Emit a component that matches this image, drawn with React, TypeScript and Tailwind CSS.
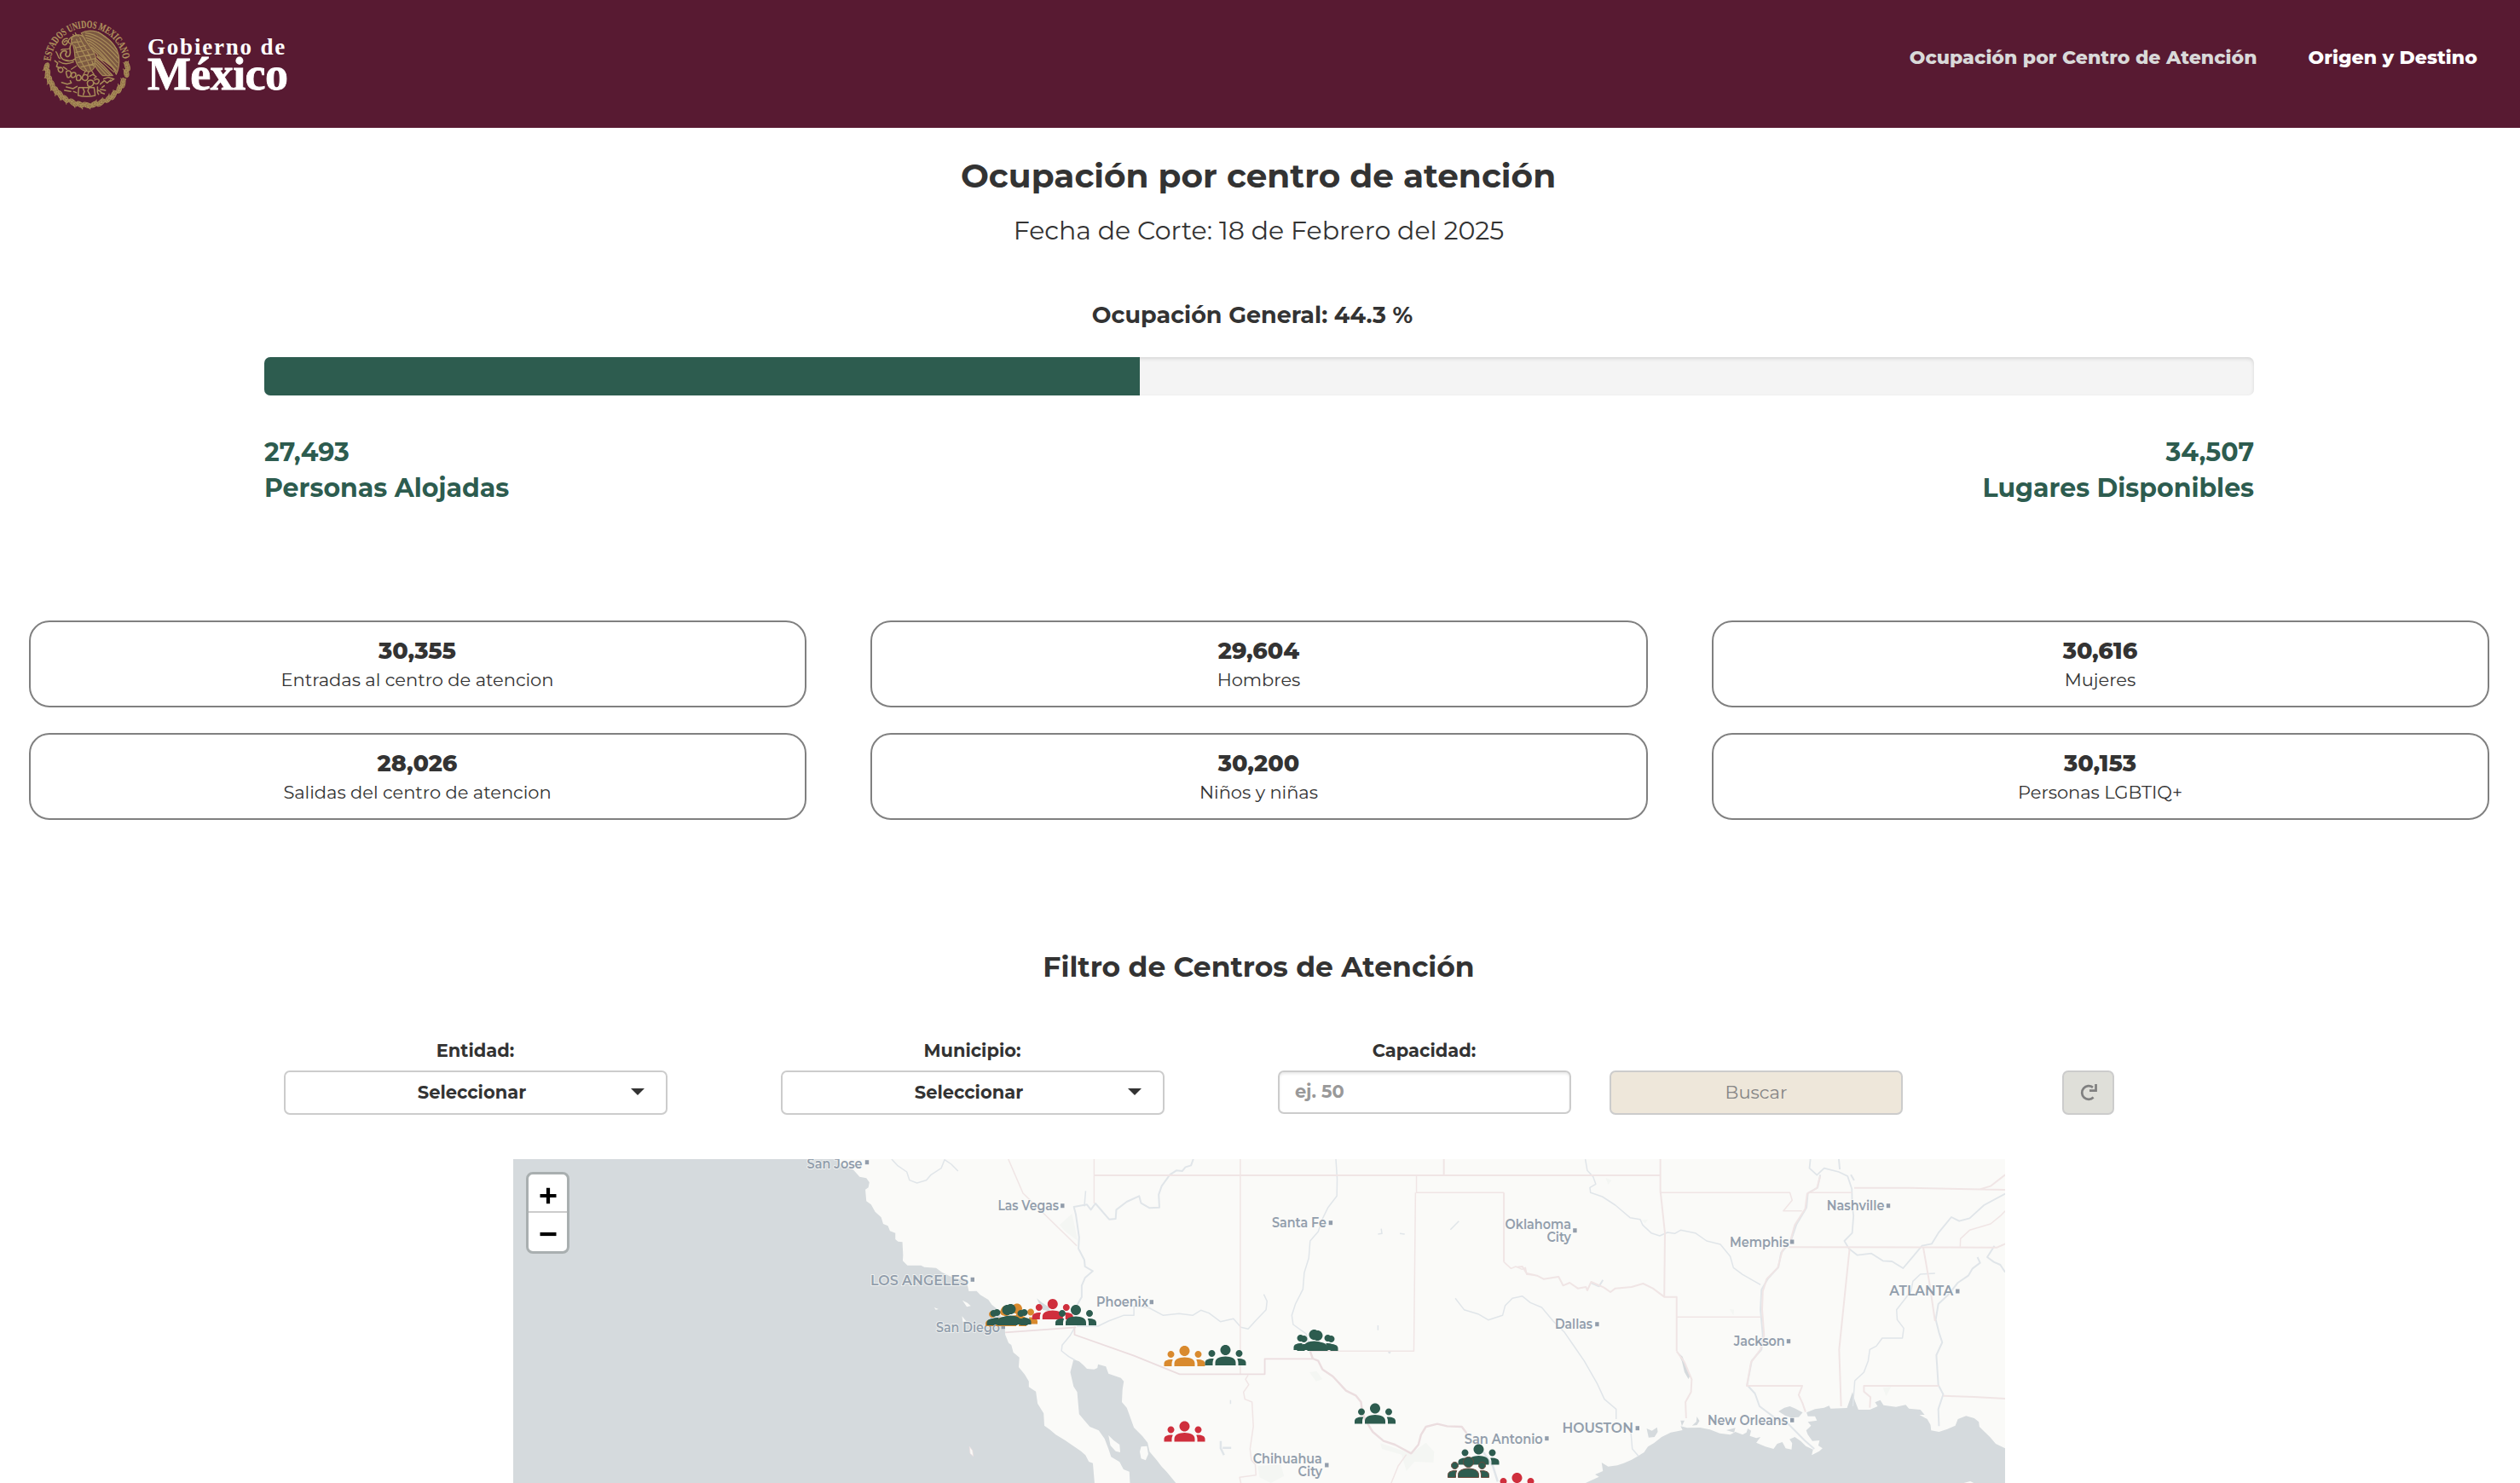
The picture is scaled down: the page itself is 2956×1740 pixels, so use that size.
import React from "react";

const stats = [
  { value: "30,355", label: "Entradas al centro de atencion" },
  { value: "29,604", label: "Hombres" },
  { value: "30,616", label: "Mujeres" },
  { value: "28,026", label: "Salidas del centro de atencion" },
  { value: "30,200", label: "Niños y niñas" },
  { value: "30,153", label: "Personas LGBTIQ+" },
];

// Wreath leaves: angle (degrees, clockwise from the right) around the seal.
const wreath = [2, 12, 27, 37, 49, 58, 70, 80, 90, 100, 110, 122, 131, 140, 149, 158, 167, 177];

function Seal() {
  return (
    <svg viewBox="140 60 330 330" className="h-[110px] w-[110px]" fill="none" stroke="#a88c58" strokeLinecap="round" strokeLinejoin="round">
      <defs>
        <path id="seal-arc" d="M177 215 A128.500 128.500 0 0 1 433 215" />
      </defs>
      <text fill="#b0935d" stroke="#b0935d" strokeWidth="0.6" className="font-['Liberation_Serif'] text-[37px] font-bold">
        <textPath href="#seal-arc" textLength="388" lengthAdjust="spacingAndGlyphs">
          ESTADOS UNIDOS MEXICANOS
        </textPath>
      </text>
      {/* Wreath */}
      {wreath.map((a, i) => (
        <g key={a} transform={`rotate(${a} 305 228) translate(447 228) rotate(${a < 90 ? 70 : 110})`} strokeWidth="3">
          <ellipse rx={i % 2 ? 14 : 17} ry="8" fill="#8a6a44" />
          <path d="M-14 0 H15 M-8 -6 L0 0 L-8 6 M2 -6 L9 0 L2 6 M-16 -9 l8 4 M-16 9 l8 -4" />
        </g>
      ))}
      {/* Wing */}
      <g strokeWidth="3.6">
        <path fill="#7d5a42" d="M285 116 C310 102 345 108 365 128 C392 142 412 170 417 196 C420 222 416 246 408 262 C400 240 385 220 366 214 C350 212 342 200 340 190 C326 176 300 160 296 136 Z" />
        <path d="M300 116 C340 120 380 150 414 190" />
        <path d="M300 124 C338 130 376 160 414 204" />
        <path d="M302 133 C334 140 372 172 413 220" />
        <path d="M306 142 C334 150 366 184 411 236" />
        <path d="M312 152 C336 164 362 194 408 250" />
        <path d="M320 166 C338 176 358 200 400 240" />
        <path d="M345 113 C372 128 398 152 410 174" />
      </g>
      {/* Body and tail feathers */}
      <g strokeWidth="3.6">
        <path fill="#7d5a42" d="M250 134 C262 120 284 118 294 132 C302 150 322 168 332 190 C342 216 336 244 314 252 C290 254 268 234 264 206 C260 186 262 160 250 148 Z" />
        <path d="M268 138 C280 170 300 190 318 244 M280 132 C290 160 316 184 328 232 M262 160 C272 190 282 220 304 248 M262 150 L284 146 M266 168 L300 160 M266 184 L316 174 M268 202 L328 190 M274 220 L334 206 M284 236 L334 224" />
        <path fill="#7d5a42" d="M334 204 C352 220 378 246 396 266 L360 266 C348 254 338 242 332 228 Z" />
        <path d="M336 214 L386 264 M336 224 L374 265 M340 200 L400 254 M348 200 L404 244" />
        <path d="M300 250 L292 264 M312 252 L306 266 M322 250 L330 262 M268 232 L250 244" />
      </g>
      {/* Head, beak and snake */}
      <g strokeWidth="5">
        <path strokeWidth="4" d="M276 126 C262 122 246 130 240 142 C238 150 244 156 252 152 C258 148 262 146 266 148 M250 138 L254 138 M240 146 L234 152 M268 124 l-4 -8 M260 128 l-4 -7" />
        <path d="M236 136 C224 134 216 144 220 154 C224 160 232 160 234 152 M226 148 C228 142 234 142 238 146" />
        <path d="M250 156 C238 168 252 182 244 194 C236 206 226 196 232 186 C238 178 222 176 216 184 C206 194 214 208 228 212 C242 216 256 214 262 208" />
        <path strokeWidth="4" d="M196 182 C204 190 200 200 210 206 M206 216 C220 226 240 226 258 218 M214 176 C220 170 236 176 244 170" />
      </g>
      {/* Cactus and rock */}
      <g strokeWidth="4.500">
        <path d="M192 214 L202 222 L198 234 L210 240 M204 246 C200 238 212 234 218 240 C224 248 218 256 210 254 C206 252 204 250 204 246 Z M222 236 L234 244" />
        <path d="M232 258 C230 248 244 246 248 254 C252 264 244 276 236 272 Z M250 262 C252 252 266 254 266 262 C266 272 254 276 250 270 Z" />
        <path d="M268 270 C272 260 286 264 284 276 C282 286 268 286 268 278 Z M290 268 C298 258 312 264 308 276 C304 288 290 284 288 276 Z" />
        <path d="M306 292 C308 280 326 278 328 290 C330 302 316 308 308 302 Z M314 268 L326 262 L338 270 L330 276 M332 282 C340 274 352 280 346 290 C342 298 332 296 330 290" />
        <path d="M216 290 L236 296 L250 292 L246 284 M232 306 L256 312 L270 304 M352 296 L366 284 L376 292 L388 282 M364 278 L380 272 L400 278 L388 286 M226 318 L248 322 M258 322 L268 326" />
        <path d="M276 308 H330 L334 336 C312 342 296 342 274 336 Z M290 308 L296 322 L292 334 M312 308 L308 320 L316 334" />
        <path d="M342 306 C344 316 338 326 346 332 M352 314 L370 318 M354 326 L366 330 M358 308 L366 302 M344 318 L354 322" />
      </g>
    </svg>
  );
}

const people =
  "M12 12.75c1.63 0 3.07.39 4.24.9 1.08.48 1.76 1.56 1.76 2.73V18H6v-1.61c0-1.18.68-2.26 1.76-2.73 1.17-.52 2.61-.91 4.24-.91zM4 13c1.1 0 2-.9 2-2s-.9-2-2-2-2 .9-2 2 .9 2 2 2zm1.13 1.1c-.37-.06-.74-.1-1.13-.1-.99 0-1.93.21-2.78.58C.48 14.9 0 15.62 0 16.43V18h4.5v-1.61c0-.83.23-1.61.63-2.29zM20 13c1.1 0 2-.9 2-2s-.9-2-2-2-2 .9-2 2 .9 2 2 2zm4 3.43c0-.81-.48-1.53-1.22-1.85-.85-.37-1.79-.58-2.78-.58-.39 0-.76.04-1.13.1.4.68.63 1.46.63 2.29V18H24v-1.57zM12 6c1.66 0 3 1.34 3 3s-1.34 3-3 3-3-1.34-3-3 1.34-3 3-3z";

const GREEN = "#2d5c4f";
const ORANGE = "#d98a2e";
const RED = "#cf2f3d";

// Centre x, bottom y, colour, optional outline
const markers: [number, number, string, string?][] = [
  [1180, 1556, ORANGE],
  [1193, 1553.5, ORANGE],
  [1185.5, 1554, GREEN],
  [1181.5, 1555, GREEN],
  [1234.800, 1548, RED],
  [1262, 1555, GREEN],
  [1389.500, 1603, ORANGE],
  [1437.500, 1602, GREEN],
  [1541.500, 1584, GREEN],
  [1545.500, 1585, GREEN],
  [1389.500, 1691.500, RED],
  [1613, 1670.500, GREEN],
  [1734.500, 1718.500, GREEN],
  [1722.500, 1733.500, GREEN, "#6b4a3c"],
  [1779.500, 1752, RED],
];

// Text, left x, width, baseline y, large
const places: [string, number, number, number, boolean?][] = [
  ["San Jose", 946.600, 65, 1370.700],
  ["Las Vegas", 1170.400, 71.500, 1419.700],
  ["LOS ANGELES", 1021, 115, 1508.300, true],
  ["San Diego", 1098, 75, 1562.700],
  ["Phoenix", 1286, 61, 1533],
  ["Santa Fe", 1492, 64, 1440.300],
  ["Chihuahua", 1469.800, 81, 1717],
  ["City", 1522.600, 28.500, 1731.700],
  ["Oklahoma", 1765.600, 77.500, 1442],
  ["City", 1814.400, 28.500, 1456.700],
  ["Nashville", 2142.800, 67.700, 1419.700],
  ["Memphis", 2029, 69.400, 1462.700],
  ["ATLANTA", 2216.300, 75, 1519.700, true],
  ["Dallas", 1824, 44, 1559.300],
  ["Jackson", 2033.700, 60, 1578.700],
  ["New Orleans", 2003, 94, 1671.700],
  ["HOUSTON", 1832.400, 83.500, 1680.700, true],
  ["San Antonio", 1717.800, 92, 1693.700],
];

const dots: [number, number][] = [
  [1017, 1363.700], [1246.300, 1414.700], [1140.800, 1501.300], [1176.800, 1556.700], [1350.800, 1527.700],
  [1560.900, 1434.700], [1556.300, 1719], [1847.400, 1443.700], [2215, 1414.700], [2102.200, 1457],
  [2296.300, 1515], [1873.400, 1553.700], [2098, 1573.700], [2102.200, 1666.300], [1920.800, 1675.700], [1814.400, 1687.700],
];

const WEST = "translate(590 1350) scale(0.3954 0.33333)";
const CENTRAL = "translate(1200 1350) scale(0.3827 0.33333)";
const EAST = "translate(1780 1350) scale(0.3827 0.33333)";

function Line({ d, w = 1.5 }: { d: string; w?: number }) {
  return <path d={d} strokeWidth={w} vectorEffect="non-scaling-stroke" />;
}

function MapCanvas() {
  return (
    <svg viewBox="602 1360 1750 380" className="block h-[380px] w-[1750px] bg-[#fafaf8]">
      {/* Water */}
      <g fill="#d5dadd">
        <path transform={WEST} d="M0 0 H975 L1000 45 L1040 68 L1058 92 L1078 97 L1087 112 L1084 130 L1075 137 L1078 178 L1092 190 L1104 215 L1122 235 L1128 258 L1142 265 L1148 283 L1164 290 L1164 312 L1172 320 L1185 322 L1187 368 L1186 388 L1200 404 L1240 404 L1250 410 L1285 413 L1302 428 L1325 442 L1350 450 L1376 462 L1382 495 L1405 494 L1416 508 L1440 525 L1450 542 L1464 556 L1478 585 L1488 610 L1490 648 L1500 677 L1508 684 L1514 710 L1532 728 L1530 762 L1548 788 L1560 812 L1560 832 L1581 848 L1586 890 L1604 925 L1606 968 L1622 982 L1640 1000 L1668 1020 L1690 1038 L1715 1058 L1728 1072 L1738 1095 L1750 1100 L1755 1170 L1755 1200 H0 Z" />
        <g transform={CENTRAL}>
          <path d="M155 735 L172 742 L186 756 L196 768 L218 770 L228 765 L230 752 L254 760 L262 785 L300 800 L309 812 L305 840 L303 885 L318 905 L326 930 L340 975 L366 1005 L382 1028 L388 1060 L410 1090 L425 1112 L440 1130 L470 1172 H328 L326 1130 L308 1122 L296 1096 L270 1078 L262 1050 L250 1014 L232 985 L205 972 L172 928 L166 850 L155 830 L145 780 Z" />
          <path d="M42 520 L58 535 L78 550 L84 566 L60 560 Z M112 1138 L122 1172 H104 Z" />
        </g>
        <g transform={EAST}>
          <path d="M205 1172 L250 1148 L238 1140 L262 1128 L258 1098 L278 1112 L306 1108 L326 1100 L350 1088 L370 1075 L388 1062 L400 1042 L418 1030 L442 1008 L470 992 L506 984 L500 970 L520 976 L560 975 L590 982 L620 995 L652 1000 L668 990 L690 1000 L702 992 L706 978 L716 986 L712 1004 L732 1012 L745 1008 L732 1028 L760 1042 L785 1050 L796 1032 L812 1026 L822 1048 L840 1052 L842 1030 L834 1016 L850 1008 L868 1022 L884 1040 L906 1052 L902 1072 L925 1058 L935 1048 L922 1038 L926 1020 L904 1022 L890 1000 L885 985 L900 968 L890 955 L918 950 L912 935 L890 935 L886 922 L912 910 L940 905 L955 898 L960 908 L1010 906 L1018 880 L1027 850 L1034 880 L1045 912 L1080 912 L1104 900 L1096 886 L1112 878 L1122 896 L1160 902 L1190 895 L1200 908 L1235 912 L1248 930 L1232 930 L1256 945 L1266 965 L1268 985 L1292 990 L1318 980 L1342 968 L1350 945 L1375 934 L1400 942 L1414 955 L1416 972 L1432 990 L1450 1010 L1466 1032 L1495 1048 V1172 Z" />
          <path d="M800 918 L818 905 L835 900 L852 908 L874 922 L862 938 L838 940 L820 932 Z" />
          <path d="M396 978 L412 986 L428 974 L430 990 L420 1008 L402 1010 Z" />
          <path d="M492 710 L506 725 L516 760 L530 790 L524 804 L512 780 L504 742 Z" />
          <path d="M550 936 L558 952 L550 966 L535 968 L548 955 Z M500 950 L512 950 L504 970 Z M640 984 L668 976 L664 992 Z" />
        </g>
      </g>
      {/* Islands */}
      <g fill="#fafaf8">
        <path transform={WEST} d="M1363 527 L1378 536 L1388 547 L1376 550 Z M1279 552 L1292 558 L1284 560 Z M1362 583 L1374 600 L1364 602 Z" />
        <path transform={WEST} d="M1384 1042 L1393 1056 L1395 1076 L1386 1066 Z" stroke="#eedfe0" strokeWidth="2" />
        <path transform={CENTRAL} d="M262 1002 L278 1020 L296 1035 L298 1062 L284 1058 L268 1038 Z M362 1042 L380 1040 L384 1068 L376 1090 L362 1084 L358 1060 Z" />
        <path transform={EAST} d="M1368 1170 l20 -6 l14 8 Z" />
      </g>
      {/* Parks */}
      <g fill="#f4f6f3">
        <path transform={CENTRAL} d="M150 222 L158 262 L168 318 L130 285 L112 262 Z M878 780 L900 776 L918 805 L898 812 Z M1095 1030 L1190 1066 L1235 1028 L1260 1060 L1258 1098 L1200 1095 L1175 1128 L1160 1070 L1100 1050 Z M720 1110 L790 1105 L800 1145 L760 1170 L725 1150 Z" />
        <path transform={EAST} d="M270 95 L288 105 L278 120 Z M1120 835 L1145 832 L1130 865 Z M650 558 L664 560 L662 580 Z M380 245 L400 242 L392 256 Z" />
      </g>
      {/* Rivers */}
      <g fill="none" stroke="#e0e5e9" strokeLinejoin="round">
        <g transform={WEST}>
          <Line d="M1153 30 L1170 52 L1198 75 L1206 104 L1228 114 L1256 104 L1270 85 L1300 62 L1310 32 L1330 48 L1350 72" />
        </g>
        <g transform={CENTRAL}>
          <Line w={2} d="M522 30 L515 52 L498 58 L488 72 L470 70 L450 85 L425 125 L416 155 L418 200 L388 202 L362 185 L356 160 L318 180 L286 208 L284 240 L264 242 L240 210 L222 186 L208 208 L196 190 L156 198 L162 225 L172 305 L170 345 L188 385 L190 408 L214 424 L190 448 L180 475 L180 515 L165 545" />
          <Line d="M192 142 L188 196" />
          <Line d="M165 618 L230 618 L262 600 L308 580 L340 580 L340 548 L384 552 L430 580 L478 574 L520 580 L545 562 L570 572 L605 602 L645 592 L668 622 L690 628 L712 600 L745 560 L748 530 L738 506" />
          <Line d="M959 30 L963 100 L962 160 L935 200 L918 240 L905 285 L880 318 L876 378 L862 430 L858 488 L835 540 L824 580 L828 612 L868 645 L880 700" />
          <Line d="M160 620 L145 650 L120 685 L118 705 L140 725 L160 738" />
          <Line d="M1325 520 L1352 560 L1395 575 L1426 596 L1470 580 L1478 545 L1500 520 L1530 512 L1555 535 L1590 552 L1625 600 L1660 640 L1690 690 L1720 740 L1760 820 L1782 875 L1818 910 L1818 945" />
          <Line d="M1310 278 L1336 248 M1098 275 L1100 292 L1088 294 M1155 292 L1170 294 M1088 615 V632 M636 878 V892" />
          <Line w={2.500} d="M606 1022 L606 1048 L616 1072 M612 1046 L638 1046" />
          <Line w={2.500} d="M1120 708 L1126 712 M1410 1060 L1440 1110 L1455 1165" />
        </g>
        <g transform={EAST}>
          <Line d="M208 30 L214 70 L232 92 L240 118 L222 130 L224 148 L260 162 L300 192 L345 236 L376 242 L384 262 L410 290 L436 300 L460 288 L482 292 L500 280 L545 290 L580 318 L622 330 L652 372 L662 412 L690 436 L745 472" />
          <Line d="M348 995 L352 1050 L370 1074" />
          <Line w={1.800} d="M898 30 L895 62 L918 86 L940 62 L985 75 L1012 90 L1025 135 L1026 190 L1030 230 L1026 290 L1002 318 L1016 345 L1042 368 L1085 362 L1120 388 L1148 390 L1182 414 L1210 376 L1240 335 L1270 328 L1290 290 L1330 234 L1354 248 L1386 238 L1430 192 L1495 152" />
          <Line w={2} d="M985 30 L988 66 M1022 85 L1032 105" />
          <Line w={2} d="M928 85 L920 130 L890 150 L886 200 L855 260 L838 318 L808 360 L800 410 L768 450 L748 490 L745 560 L752 650 L748 700 L718 740 L704 825 L728 855 L742 900 L800 950 L830 962 L880 1020 L910 1050" />
          <Line d="M1280 432 L1235 435 L1212 460 L1206 495 L1186 525 L1162 560 L1164 595 L1184 625 L1180 660 L1118 660 L1100 688 L1080 700 L1075 740 L1062 780 L1034 810 L1028 900" />
          <Line w={2} d="M1410 375 L1418 395 L1395 415 L1382 440 L1350 465 L1320 508 L1290 540 L1282 595 L1292 640 L1302 675 L1284 720 L1290 825 L1305 858 L1290 910 L1292 970" />
          <Line w={2} d="M1462 335 L1440 375 L1460 392 L1480 402 L1495 428 M226 466 L250 478 L262 455" />
        </g>
      </g>
      {/* State and country borders */}
      <g fill="none" stroke="#f0e5e5" strokeLinejoin="round">
        <g transform={CENTRAL}>
          <Line d="M-45 30 L0 150 L165 335" />
          <Line d="M218 30 V186" />
          <Line w={2} d="M218 87 H1517" />
          <Line d="M666 30 V787" />
          <Line w={2} d="M1290 30 V87" />
          <Line d="M1206 87 V148 H1474" />
          <Line w={2} d="M1474 148 V392" />
          <Line d="M1203 148 L1198 706 H880" />
          <Line d="M1474 392 L1496 415 L1510 408 L1530 418 L1540 412 L1544 436 L1568 438" />
          <Line d="M690 790 L682 805 L692 824 L676 850 L680 875 L702 885 L706 970 L696 1050 L700 1090 L712 1105 L714 1142 L664 1150 L668 1172" />
          <Line d="M1175 1070 L1150 1110 L1128 1172" />
        </g>
        <g transform={EAST}>
          <Line w={2} d="M0 87 H436 M438 30 V140 L452 290 L450 515" />
          <Line d="M436 148 H835 L842 175 L815 212 H872" />
          <Line d="M890 148 H1025" />
          <Line w={2} d="M1032 131 H1200 L1495 138 M1415 137 L1450 125 L1495 85" />
          <Line w={2} d="M832 340 L1470 341 L1495 328" />
          <Line d="M1357 338 L1358 310 L1386 280 L1450 258 L1480 230 L1495 212" />
          <Line w={2} d="M1018 345 L1004 500 L986 700 L992 900" />
          <Line w={2} d="M1244 342 L1262 460 L1280 600" />
          <Line w={2} d="M0 410 L15 408 L28 432 L60 440 L80 452 L126 444 L140 475 L160 465 L185 485 L210 480 L214 492 L226 462 L265 482 L285 498 L300 485 L350 480 L385 468 L415 485 L450 515 H488 V706" />
          <Line d="M488 586 H746" />
          <Line w={2} d="M928 90 L918 132 L888 152 L882 205 L850 262 L836 320 L812 352 L798 412 L764 452 L752 495 L750 560 L756 650 L745 700 L716 745 L703 828 H873 L862 860 L874 890 L883 920" />
          <Line w={2} d="M488 706 L512 745 L534 805 L532 850 L515 885 L517 942" />
          <Line w={2} d="M1080 905 L1082 868 L1062 848 V828 H1292" />
          <Line w={2} d="M1305 863 L1400 867 L1495 873" />
        </g>
        <g stroke="#ebdddf">
          <g transform={WEST}>
            <Line w={1.800} d="M1490 640 L1700 622" />
          </g>
          <g transform={CENTRAL}>
            <Line w={1.800} d="M158 620 V648 L340 722 L480 787 H741 V733 H888" />
            <Line w={2.400} d="M880 706 L888 732 L905 740 L918 770 L950 795 L990 845 L1020 862 L1036 885 L1040 920 L1050 950 L1072 990 L1105 1022 L1140 1035 L1190 1066 L1212 1035 L1220 1000 L1235 972 L1270 962 L1300 970 L1345 972 L1360 995" />
          </g>
        </g>
      </g>
      {/* Place names */}
      <g fill="#929eac" stroke="#fafaf8" strokeOpacity="0.7" strokeWidth="2" paintOrder="stroke" strokeLinejoin="round">
        {places.map(([name, x, width, y, large]) => (
          <text
            key={`${name}-${x}`}
            x={x}
            y={y}
            textLength={width}
            lengthAdjust="spacingAndGlyphs"
            className={large ? "font-['Montserrat','Inter',sans-serif] text-[16.5px] font-semibold" : "font-['Montserrat','Inter',sans-serif] text-[15.5px] font-semibold"}
          >
            {name}
          </text>
        ))}
      </g>
      {dots.map(([x, y]) => (
        <rect key={`${x}-${y}`} x={x - 2.200} y={y - 2.500} width="4.400" height="5" fill="#929dab" />
      ))}
      {/* Centres */}
      {markers.map(([x, y, color, outline], i) => (
        <path key={i} d={people} transform={`translate(${x - 24} ${y - 36}) scale(2)`} fill={color} stroke={outline ?? "none"} strokeWidth="0.5" />
      ))}
    </svg>
  );
}

function SelectBox() {
  return (
    <div className="flex h-[52px] w-[450px] items-center rounded-[7px] border-2 border-[#ccc] bg-white pr-[25px] pl-[32px]">
      <span className="flex-1 text-center text-[21px] leading-[48px] font-bold">Seleccionar</span>
      <svg viewBox="0 0 16 8" className="-mt-[3px] h-[8px] w-[16px]" fill="#333">
        <path d="M0 0 H16 L8 8 Z" />
      </svg>
    </div>
  );
}

function Field({ label, children }: { label: string; children: React.ReactNode }) {
  return (
    <div className="flex flex-col">
      <div className="mb-[7px] pr-px text-center text-[21px] leading-[32px] font-bold">{label}</div>
      {children}
    </div>
  );
}

export default function App() {
  return (
    <div className="h-[1740px] w-[2956px] overflow-hidden bg-white font-['Montserrat','Inter',sans-serif] text-[#333]">
      <header className="flex h-[150px] justify-between bg-[#581a32] pr-[50px] pl-[47px] text-white">
        <div className="flex pt-[20px]">
          <Seal />
          <div className="ml-[16px] flex flex-col pt-[21px] font-['Liberation_Serif',serif] font-bold whitespace-nowrap">
            <span className="text-[27px] leading-[28px] tracking-[1.8px]">Gobierno de</span>
            <span className="-mt-[2px] text-[54px] leading-[40px] tracking-[-0.6px] [-webkit-text-stroke:0.8px_white]">México</span>
          </div>
        </div>
        <nav className="flex gap-[60px] pt-[52px] text-[22px] leading-[31px] font-extrabold tracking-[0.04px]">
          <a className="text-[#d9d9d9]">Ocupación por Centro de Atención</a>
          <a>Origen y Destino</a>
        </nav>
      </header>

      <main>
        <section className="pt-[28px] text-center">
          <h1 className="pr-[4px] text-[39px] leading-[56px] font-bold">Ocupación por centro de atención</h1>
          <p className="mt-[17px] pr-[3px] text-[30px] leading-[40px]">Fecha de Corte: 18 de Febrero del 2025</p>
          <p className="mt-[59px] pr-[18px] text-[27px] leading-[40px] font-bold">Ocupación General: 44.3 %</p>
        </section>

        <section className="mx-auto mt-[29px] w-[2334px] -translate-x-px">
          <div className="h-[45px] overflow-hidden rounded-[7px] bg-[#f4f4f4] shadow-[inset_0_2px_4px_rgba(0,0,0,0.12)]">
            <div className="h-full w-[1027px] bg-[#2d5c4f]" />
          </div>
          <div className="mt-[46px] flex justify-between text-[30px] leading-[42px] font-bold text-[#2d5c4f]">
            <div>
              <div>27,493</div>
              <div>Personas Alojadas</div>
            </div>
            <div className="text-right">
              <div>34,507</div>
              <div>Lugares Disponibles</div>
            </div>
          </div>
        </section>

        <section className="mt-[134px] grid grid-cols-3 gap-x-[75px] gap-y-[30px] pr-[36px] pl-[34px]">
          {stats.map((s) => (
            <div key={s.label} className="h-[102px] rounded-[24px] border-2 border-[#808080] pt-[17px] pr-px text-center">
              <div className="text-[27px] leading-[34px] font-extrabold">{s.value}</div>
              <div className="text-[21px] leading-[34px] tracking-[-0.04px]">{s.label}</div>
            </div>
          ))}
        </section>

        <h2 className="mt-[148px] pr-[3px] text-center text-[33px] leading-[48px] font-bold">Filtro de Centros de Atención</h2>

        <section className="mt-[59px] flex items-end pl-[333px]">
          <Field label="Entidad:">
            <SelectBox />
          </Field>
          <div className="ml-[133px]">
            <Field label="Municipio:">
              <SelectBox />
            </Field>
          </div>
          <div className="ml-[133px]">
            <Field label="Capacidad:">
              <div className="mb-px h-[51px] w-[344px] rounded-[7px] border-2 border-[#ccc] pl-[18px] text-[21px] leading-[46px] font-bold text-[#999] shadow-[inset_0_2px_3px_rgba(0,0,0,0.09)]">
                ej. 50
              </div>
            </Field>
          </div>
          <div className="ml-[45px] h-[52px] w-[344px] rounded-[7px] border-2 border-[#ccc] bg-[#eee7da] text-center text-[21px] leading-[48px] text-[#858585]">
            Buscar
          </div>
          <div className="ml-[187px] flex h-[52px] w-[61px] items-center justify-center rounded-[7px] border-2 border-[#ccc] bg-[#dfdfd9]">
            <svg viewBox="0 0 20 20" className="-mt-[2px] h-[21px] w-[21px]" fill="none" stroke="#808080" strokeWidth="2.600">
              <path d="M15.200 4.600 A7.500 7.500 0 1 0 15.800 15.800" />
              <path d="M18.600 1 V8.200 H11.400" />
            </svg>
          </div>
        </section>

        <section className="relative mt-[52px] ml-[602px] h-[380px] w-[1750px]">
          <MapCanvas />
          <div className="absolute top-[15px] left-[15px] flex h-[96px] w-[51px] flex-col rounded-[8px] border-[3px] border-[#a9afb0] bg-white">
            <div className="flex h-[45px] items-center justify-center border-b-2 border-[#ccc]">
              <svg viewBox="0 0 20 20" className="mt-[6px] h-[20px] w-[20px]" fill="none" stroke="#000" strokeWidth="4.200">
                <path d="M0.500 10 H19.500 M10 0.800 V19.200" />
              </svg>
            </div>
            <div className="flex flex-1 items-center justify-center">
              <svg viewBox="0 0 20 20" className="mt-[4px] h-[20px] w-[20px]" fill="none" stroke="#000" strokeWidth="4.200">
                <path d="M0.500 10 H19.500" />
              </svg>
            </div>
          </div>
        </section>
      </main>
    </div>
  );
}
